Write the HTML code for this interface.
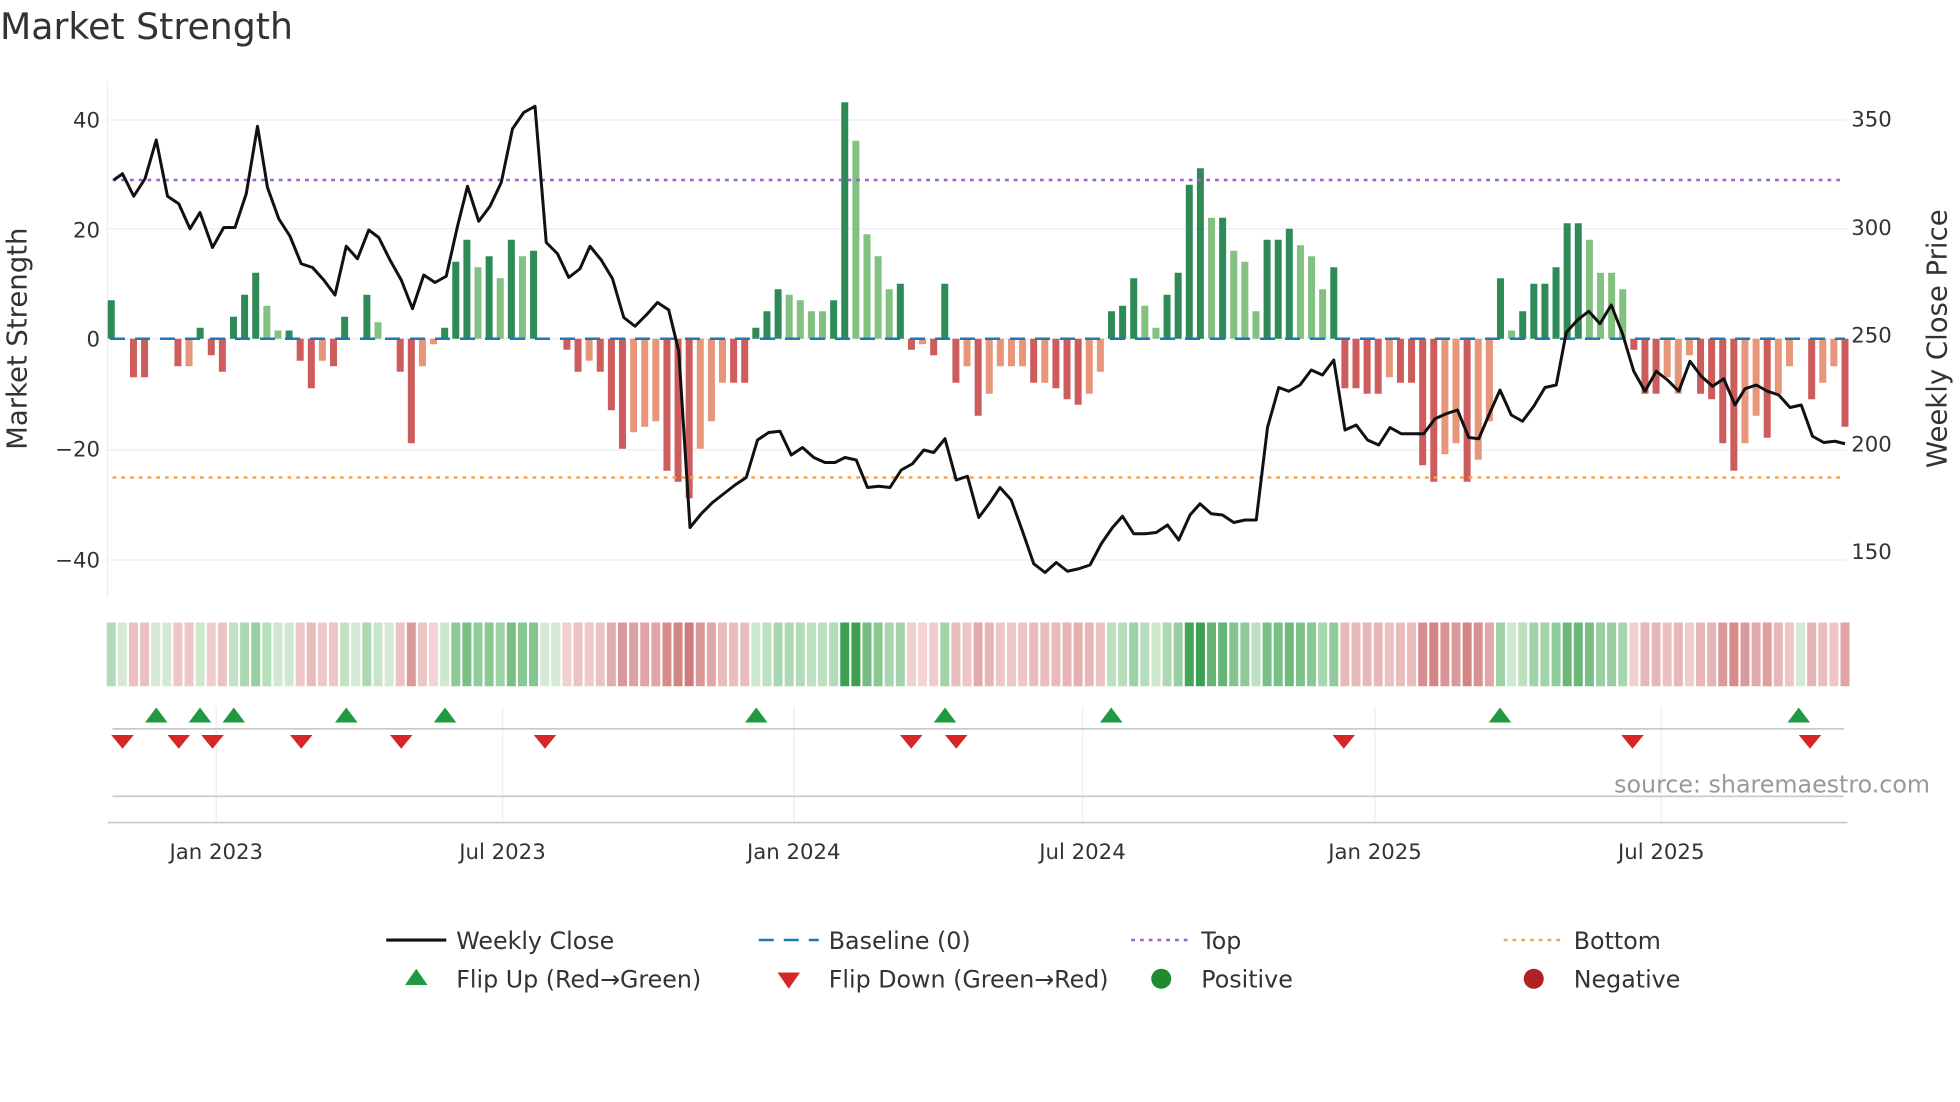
<!DOCTYPE html>
<html><head><meta charset="utf-8"><style>
html,body{margin:0;padding:0;background:#fff;}
svg{display:block;font-family:"DejaVu Sans","Liberation Sans",sans-serif;}
</style></head><body>
<svg id="s" width="1960" height="1102" viewBox="0 0 1568 881.6" xmlns="http://www.w3.org/2000/svg">
<rect width="1568" height="882" fill="#fff"/>
<text x="0" y="31" font-size="29" fill="#333">Market Strength</text>
<g id="grid" stroke="#eef0f3" stroke-width="1.2">
<line x1="86" y1="96" x2="1478" y2="96"/><line x1="86" y1="183" x2="1478" y2="183"/>
<line x1="86" y1="271" x2="1478" y2="271"/><line x1="86" y1="360" x2="1478" y2="360"/>
<line x1="86" y1="448" x2="1478" y2="448"/>
<line x1="86" y1="65" x2="86" y2="478"/>
</g>
<g font-size="17" fill="#333" text-anchor="end">
<text x="80" y="102">40</text><text x="80" y="190">20</text><text x="80" y="277">0</text>
<text x="80" y="365">−20</text><text x="80" y="454">−40</text>
</g>
<g font-size="17" fill="#333">
<text x="1481" y="101">350</text><text x="1481" y="188">300</text><text x="1481" y="274">250</text>
<text x="1481" y="361">200</text><text x="1481" y="447">150</text>
</g>
<text transform="translate(21,271) rotate(-90)" font-size="22" fill="#333" text-anchor="middle">Market Strength</text>
<text transform="translate(1557,271) rotate(-90)" font-size="22" fill="#333" text-anchor="middle">Weekly Close Price</text>
<g id="bars"></g>
<line x1="88" y1="271" x2="1476" y2="271" stroke="#1f77b4" stroke-width="2" stroke-dasharray="12,8"/>
<line x1="90" y1="144" x2="1476" y2="144" stroke="#9b5fd6" stroke-width="2" stroke-dasharray="3,4"/>
<line x1="90" y1="382" x2="1476" y2="382" stroke="#f0a35a" stroke-width="2" stroke-dasharray="3,4"/>
<polyline id="price" fill="none" stroke="#111" stroke-width="2.4" stroke-linejoin="round"/>
<g id="heat"></g>
<g stroke="#eceef0" stroke-width="1">
<line x1="173" y1="565" x2="173" y2="658"/><line x1="402" y1="565" x2="402" y2="658"/>
<line x1="635" y1="565" x2="635" y2="658"/><line x1="866" y1="565" x2="866" y2="658"/>
<line x1="1100" y1="565" x2="1100" y2="658"/><line x1="1329" y1="565" x2="1329" y2="658"/>
</g>
<line x1="90" y1="583" x2="1475" y2="583" stroke="#c8c8c8" stroke-width="1.3"/>
<line x1="90" y1="637" x2="1475" y2="637" stroke="#c8c8c8" stroke-width="1.3"/>
<line x1="86" y1="658" x2="1478" y2="658" stroke="#c8c8c8" stroke-width="1.3"/>
<g id="marks"></g>
<text x="1544" y="634" font-size="19" fill="#999" text-anchor="end">source: sharemaestro.com</text>
<g font-size="17" fill="#333" text-anchor="middle">
<text x="173" y="687">Jan 2023</text><text x="402" y="687">Jul 2023</text><text x="635" y="687">Jan 2024</text>
<text x="866" y="687">Jul 2024</text><text x="1100" y="687">Jan 2025</text><text x="1329" y="687">Jul 2025</text>
</g>
<g font-size="19" fill="#333">
<line x1="309" y1="752" x2="357" y2="752" stroke="#111" stroke-width="2.5"/>
<text x="365" y="759">Weekly Close</text>
<line x1="607" y1="752" x2="655" y2="752" stroke="#1f77b4" stroke-width="2" stroke-dasharray="12,8"/>
<text x="663" y="759">Baseline (0)</text>
<line x1="905" y1="752" x2="953" y2="752" stroke="#9b5fd6" stroke-width="2" stroke-dasharray="3,4"/>
<text x="961" y="759">Top</text>
<line x1="1203" y1="752" x2="1251" y2="752" stroke="#f0a35a" stroke-width="2" stroke-dasharray="3,4"/>
<text x="1259" y="759">Bottom</text>
<polygon points="324,788 342,788 333,775" fill="#1f9a3e"/>
<text x="365" y="790">Flip Up (Red→Green)</text>
<polygon points="622,778 640,778 631,791" fill="#d62728"/>
<text x="663" y="790">Flip Down (Green→Red)</text>
<circle cx="929" cy="783" r="8" fill="#1f8a2e"/>
<text x="961" y="790">Positive</text>
<circle cx="1227" cy="783" r="8" fill="#b22222"/>
<text x="1259" y="790">Negative</text>
</g>
</svg>
<script>
var D="7g,0,-7r,-7r,0,0,-5r,-5l,2g,-3r,-6r,4g,8g,12g,6h,1.5h,1.5g,-4r,-9r,-4l,-5r,4g,0,8g,3h,0,-6r,-19r,-5l,-1l,2g,14g,18g,13h,15g,11h,18g,15h,16g,0,0,-2r,-6r,-4l,-6r,-13r,-20r,-17l,-16l,-15l,-24r,-26r,-29r,-20l,-15l,-8l,-8r,-8r,2g,5g,9g,8h,7h,5h,5h,7g,43g,36h,19h,15h,9h,10g,-2r,-1l,-3r,10g,-8r,-5l,-14r,-10l,-5l,-5l,-5l,-8r,-8l,-9r,-11r,-12r,-10l,-6l,5g,6g,11g,6h,2h,8g,12g,28g,31g,22h,22g,16h,14h,5h,18g,18g,20g,17h,15h,9h,13g,-9r,-9r,-10r,-10r,-7l,-8r,-8r,-23r,-26r,-21l,-19l,-26r,-22l,-15l,11g,1.5h,5g,10g,10g,13g,21g,21g,18h,12h,12h,9h,-2r,-10r,-10r,-7l,-10l,-3l,-10r,-11r,-19r,-24r,-19l,-14l,-18r,-10l,-5l,0,-11r,-8l,-5l,-16r".split(",");
var n=D.length,x0=89,x1=1476,st=(x1-x0)/(n-1),ns="http://www.w3.org/2000/svg";
var col={g:"#2e8b57",h:"#82c17f",r:"#cd5c5c",l:"#e8967a"};
var B=document.getElementById("bars"),H=document.getElementById("heat");
function mk(t,a,p){var e=document.createElementNS(ns,t);for(var k in a)e.setAttribute(k,a[k]);p.appendChild(e);return e;}
function mix(a,b,t){var r=[];for(var i=0;i<3;i++)r.push(Math.round(a[i]+(b[i]-a[i])*t));return"rgb("+r+")";}
for(var i=0;i<n;i++){var v=parseFloat(D[i]),c=D[i].slice(-1),x=x0+i*st;
 if(v!==0){var h=Math.abs(v)*4.4;mk("rect",{x:x-2.8,y:v>0?271-h:271,width:5.6,height:h,fill:col[c]},B);}
 var t=Math.min(Math.abs(v)/30,1),f;
 if(v>0)f=mix([214,237,214],[60,160,80],t);else if(v<0)f=mix([244,214,214],[205,120,120],t);else f="#d6e8d6";
 mk("rect",{x:x-3.6,y:498,width:7.2,height:51,fill:f},H);}
var P="91,144 98,139 107,157 116,143 125,112 134,157 143,163 152,183 160,170 170,198 179,182 188,182 197,155 206,101 214,150 223,175 232,189 241,211 250,214 259,224 268,236 277,197 286,207 295,184 303,190 312,208 321,224 330,247 339,220 348,226 357,221 366,181 374,149 383,177 392,165 401,146 410,103 419,90 428,85 437,194 446,203 455,222 464,215 472,197 481,208 490,223 499,254 508,261 517,252 526,242 535,248 543,281 552,422 561,411 570,402 579,395 588,388 597,382 606,352 615,346 624,345 633,364 642,358 651,366 660,370 668,370 676,366 685,368 694,390 703,389 712,390 721,376 730,371 739,360 747,362 756,351 765,384 774,381 783,414 792,402 800,390 809,400 818,425 827,451 836,458 845,450 854,457 863,455 872,452 881,435 890,422 898,413 907,427 916,427 925,426 934,420 943,432 952,412 960,403 969,411 978,412 987,418 996,416 1005,416 1014,342 1023,310 1031,313 1040,308 1049,296 1058,300 1067,288 1076,344 1085,340 1094,352 1103,356 1112,342 1121,347 1130,347 1139,347 1148,335 1157,331 1166,328 1175,350 1183,351 1192,330 1200,312 1209,332 1218,337 1227,325 1236,310 1245,308 1253,266 1262,256 1271,249 1280,259 1289,244 1298,267 1307,297 1316,313 1325,297 1334,304 1343,313 1352,289 1361,301 1370,309 1379,303 1388,324 1396,311 1405,308 1414,313 1423,316 1432,326 1441,324 1450,349 1459,354 1468,353 1476,355";
document.getElementById("price").setAttribute("points",P);
var M=document.getElementById("marks");
[125,160,187,277,356,605,756,889,1200,1439].forEach(function(x){mk("polygon",{points:(x-9)+",578 "+(x+9)+",578 "+x+",566",fill:"#1f9a3e"},M);});
[98,143,170,241,321,436,729,765,1075,1306,1448].forEach(function(x){mk("polygon",{points:(x-9)+",588 "+(x+9)+",588 "+x+",599",fill:"#d62728"},M);});
</script>
</body></html>
